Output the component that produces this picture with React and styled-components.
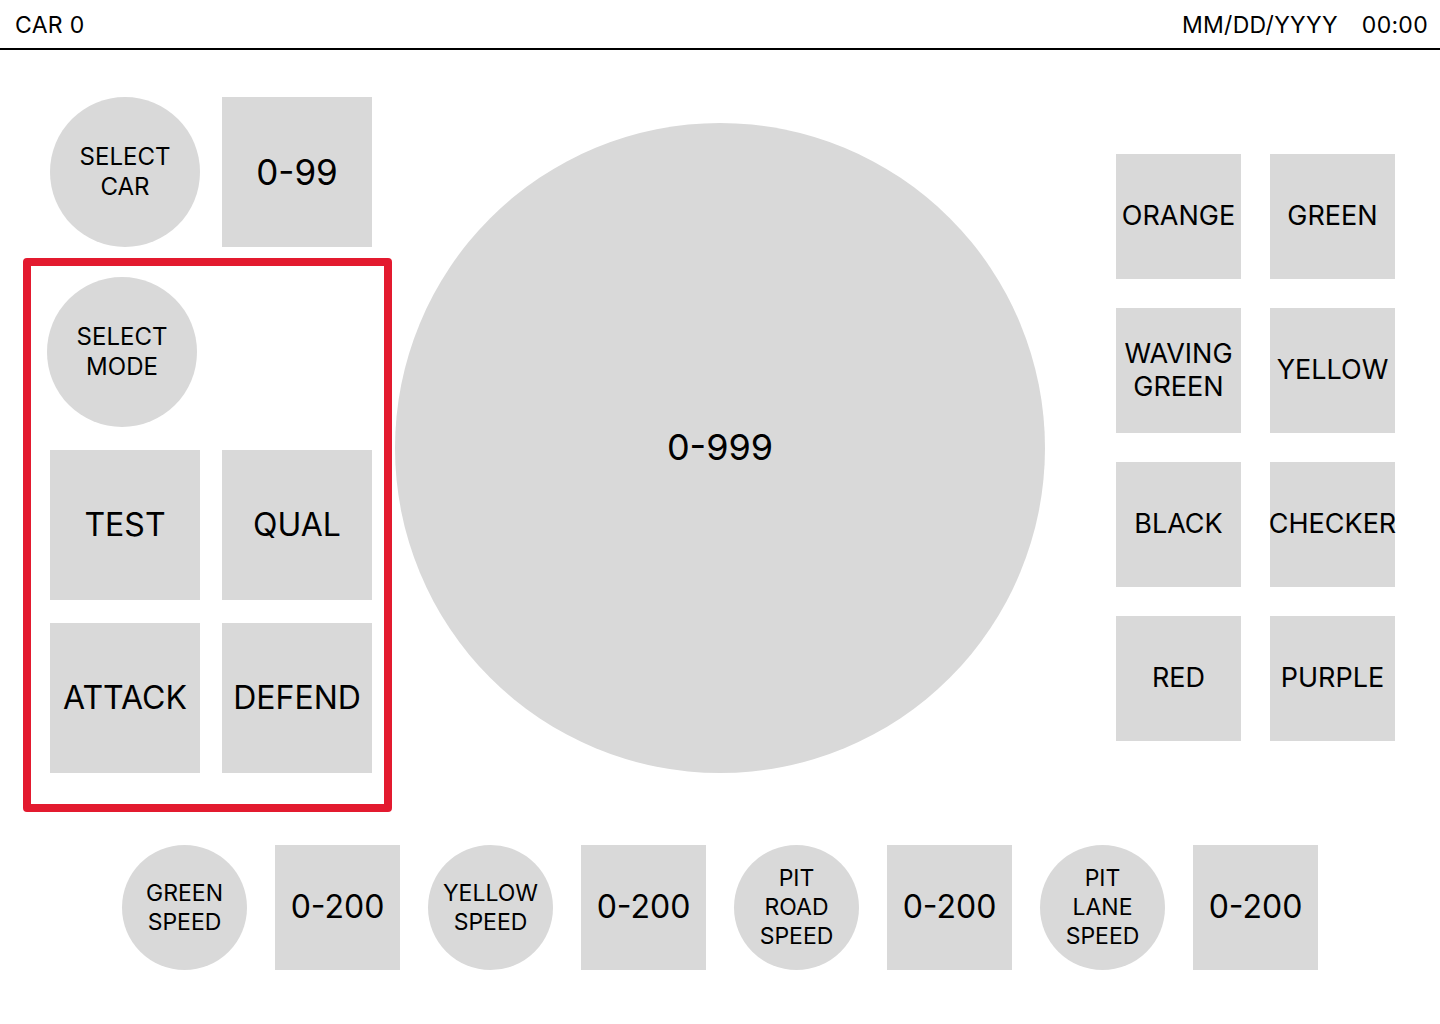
import React from "react"
import styled, { createGlobalStyle } from "styled-components"

const GlobalStyle = createGlobalStyle`
  html, body {
    margin: 0;
    padding: 0;
    background: #ffffff;
  }
  body {
    font-family: Inter, "Noto Sans", "Liberation Sans", sans-serif;
    color: #000000;
  }
`

const grey = "#d9d9d9"
const red = "#e31a2f"

const Page = styled.div`
  width: 1440px;
  height: 1024px;
  display: flex;
  flex-direction: column;
  overflow: hidden;
`

const Header = styled.header`
  height: 50px;
  flex-shrink: 0;
  display: flex;
  align-items: center;
  justify-content: space-between;
  padding: 2px 12px 0 15px;
  box-sizing: border-box;
  border-bottom: 2px solid #000000;
  font-size: 23px;
  letter-spacing: 0.3px;
`

const Clock = styled.div`
  display: flex;
  gap: 24px;
`

const Main = styled.main`
  display: flex;
  align-items: flex-start;
  padding: 47px 45px 0 50px;
`

const LeftColumn = styled.div`
  width: 322px;
  display: flex;
  flex-direction: column;
`

const Row = styled.div`
  display: flex;
  gap: 22px;
`

const ModeGroup = styled.div`
  margin: 11px 0 0 -27px;
  width: 369px;
  box-sizing: border-box;
  border: 8px solid ${red};
  border-radius: 4px;
  padding: 11px 12px 31px 19px;
  display: flex;
  flex-direction: column;
  gap: 23px;
`

const ModeGrid = styled.div`
  display: grid;
  grid-template-columns: 150px 150px;
  column-gap: 22px;
  row-gap: 23px;
`

const Tile = styled.div`
  width: ${p => p.$size}px;
  height: ${p => p.$size}px;
  flex-shrink: 0;
  background: ${grey};
  border-radius: ${p => (p.$round ? "50%" : "0")};
  display: flex;
  align-items: center;
  justify-content: center;
  text-align: center;
  font-size: ${p => p.$font}px;
  line-height: ${p => p.$leading || 1.2};
  margin-left: ${p => p.$shift || 0}px;
  white-space: nowrap;
`

const Dial = styled(Tile)`
  margin-left: 23px;
  margin-top: 26px;
`

const FlagGrid = styled.div`
  margin-left: auto;
  margin-top: 57px;
  display: grid;
  grid-template-columns: 125px 125px;
  gap: 29px;
`

const SpeedRow = styled.div`
  display: flex;
  justify-content: center;
  align-items: center;
  gap: 28px;
  margin-top: 33px;
`

const flags = [
  "ORANGE",
  "GREEN",
  "WAVING\nGREEN",
  "YELLOW",
  "BLACK",
  "CHECKER",
  "RED",
  "PURPLE",
]

const speeds = [
  ["GREEN", "SPEED"],
  ["YELLOW", "SPEED"],
  ["PIT", "ROAD", "SPEED"],
  ["PIT", "LANE", "SPEED"],
]

const Lines = ({ lines }) => (
  <div>
    {lines.map(l => (
      <div key={l}>{l}</div>
    ))}
  </div>
)

const App = () => {
  return (
    <Page>
      <GlobalStyle />
      <Header>
        <span>CAR 0</span>
        <Clock>
          <span>MM/DD/YYYY</span>
          <span>00:00</span>
        </Clock>
      </Header>

      <Main>
        <LeftColumn>
          <Row>
            <Tile $round $size={150} $font={24} $leading={1.25}>
              <Lines lines={["SELECT", "CAR"]} />
            </Tile>
            <Tile $size={150} $font={35}>
              0-99
            </Tile>
          </Row>
          <ModeGroup>
            <Tile $round $size={150} $font={24} $shift={-3} $leading={1.25}>
              <Lines lines={["SELECT", "MODE"]} />
            </Tile>
            <ModeGrid>
              <Tile $size={150} $font={32}>TEST</Tile>
              <Tile $size={150} $font={32}>QUAL</Tile>
              <Tile $size={150} $font={32}>ATTACK</Tile>
              <Tile $size={150} $font={32}>DEFEND</Tile>
            </ModeGrid>
          </ModeGroup>
        </LeftColumn>

        <Dial $round $size={650} $font={36}>
          0-999
        </Dial>

        <FlagGrid>
          {flags.map(f => (
            <Tile key={f} $size={125} $font={27}>
              <Lines lines={f.split("\n")} />
            </Tile>
          ))}
        </FlagGrid>
      </Main>

      <SpeedRow>
        {speeds.map(s => (
          <React.Fragment key={s.join(" ")}>
            <Tile $round $size={125} $font={23} $leading={1.26}>
              <Lines lines={s} />
            </Tile>
            <Tile $size={125} $font={32}>
              0-200
            </Tile>
          </React.Fragment>
        ))}
      </SpeedRow>
    </Page>
  )
}

export default App
